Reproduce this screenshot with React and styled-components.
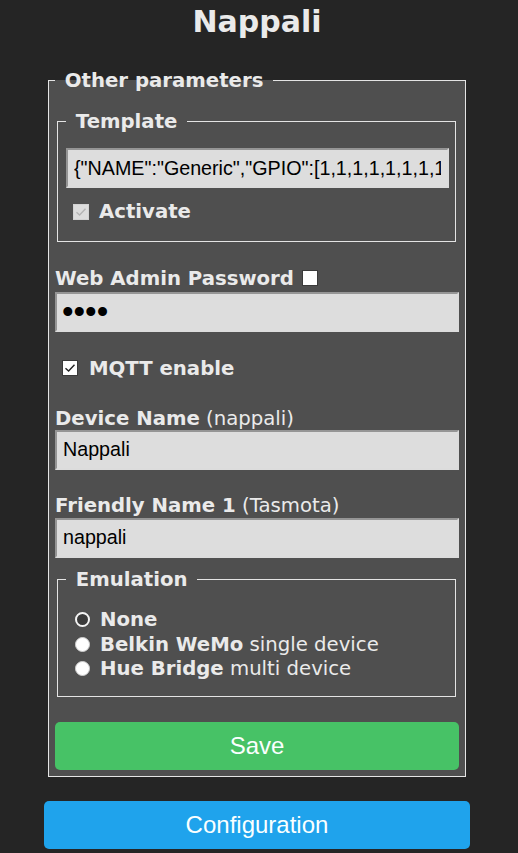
import React from 'react'
import styled, {createGlobalStyle} from 'styled-components'

const GlobalStyle = createGlobalStyle`
  html, body {
    margin: 0;
    padding: 0;
    background: #252525;
    overflow: hidden;
  }
  body {
    color: #eaeaea;
    font-family: "DejaVu Sans", Verdana, sans-serif;
    font-size: 19.7px;
    line-height: 23px;
  }
`

const Page = styled.div`
  padding-right: 4px;
`

const Wrap = styled.div`
  width: 426px;
  margin: 0 auto;
  display: flex;
  flex-direction: column;
`

const Title = styled.h2`
  margin: 4px 0 0;
  font-size: 30px;
  line-height: 35px;
  font-weight: bold;
  text-align: center;
`

const Fieldset = styled.fieldset`
  margin: ${p => p.$outer ? '29.5px 4px 0' : p.$top || '0 3px 0 2px'};
  padding: ${p => p.$outer ? '18px 6px 6px' : p.$pad || '15.5px 6px 18px 8px'};
  border: 1px solid #e4e4e4;
  background: #4f4f4f;
  min-width: 0;
  display: flex;
  flex-direction: column;
`

const Legend = styled.legend`
  padding: 0 0.5em;
  font-weight: bold;
  line-height: 23px;
`

const TextInput = styled.input`
  display: block;
  box-sizing: border-box;
  width: 100%;
  height: 40px;
  margin: ${p => p.$mt || 0} 0 0;
  padding: 0 ${p => p.$secret ? '5px' : '6px'};
  border-style: solid;
  border-width: 2px;
  border-color: #959595 #dcdcdc #dcdcdc #959595;
  background: #dddddd;
  color: #000;
  font-family: "Liberation Sans", Tahoma, sans-serif;
  font-size: ${p => p.$secret ? '33px' : '19.7px'};
  outline: none;
`

const Label = styled.div`
  display: flex;
  align-items: center;
  margin-top: ${p => p.$mt || '24.5px'};
  line-height: 23px;
  b { font-weight: bold; }
  span { white-space: pre; }
`

const CheckRow = styled.label`
  display: flex;
  align-items: center;
  margin: ${p => p.$mt || 0} 0 0 7px;
  line-height: 23px;
  font-weight: bold;
  gap: ${p => p.$gap || '10px'};
`

const Box = styled.span`
  box-sizing: border-box;
  width: 16px;
  height: 16px;
  flex: none;
  display: flex;
  align-items: center;
  justify-content: center;
  background: ${p => p.$disabled ? '#dcdcdc' : '#fff'};
  border: 1px solid ${p => p.$disabled ? '#d2d2d2' : '#3a3a3a'};
  margin-left: ${p => p.$ml || 0};
`

const RadioList = styled.div`
  display: flex;
  flex-direction: column;
`

const RadioRow = styled.div`
  display: flex;
  align-items: center;
  height: 24.5px;
  span { white-space: pre; }
`

const Dot = styled.span`
  box-sizing: border-box;
  width: 15px;
  height: 15px;
  flex: none;
  border-radius: 50%;
  margin: 0 10px 0 9px;
  background: ${p => p.$on ? '#3b3b3b' : '#fff'};
  border: ${p => p.$on ? '2px solid #f4f4f4' : '1px solid #cfcfcf'};
`

const Button = styled.button`
  display: block;
  width: 100%;
  height: 48px;
  margin-top: ${p => p.$mt || 0};
  border: 0;
  border-radius: 5px;
  background: ${p => p.$color};
  color: #faffff;
  font-family: "Liberation Sans", Tahoma, sans-serif;
  font-size: 24px;
  cursor: pointer;
`

const Check = ({color}) => (
  <svg width="12" height="10" viewBox="0 0 12 10">
    <path d="M1.5 5.2 L4.6 8 L10.5 1.8" fill="none" stroke={color} strokeWidth="1.4" />
  </svg>
)

const template = '{"NAME":"Generic","GPIO":[1,1,1,1,1,1,1,1,1,1,1,1,1,1],"FLAG":0,"BASE":18}'

const emulation = [
  {name: 'None', note: '', on: true},
  {name: 'Belkin WeMo', note: ' single device'},
  {name: 'Hue Bridge', note: ' multi device'},
]

export default function App() {
  return (
    <Page>
      <GlobalStyle />
      <Wrap>
        <Title>Nappali</Title>
        <Fieldset $outer>
          <Legend>Other parameters</Legend>
          <Fieldset>
            <Legend>Template</Legend>
            <TextInput readOnly value={template} />
            <CheckRow $mt="12px">
              <Box $disabled><Check color="#b4b4b4" /></Box>
              Activate
            </CheckRow>
          </Fieldset>

          <Label>
            <b>Web Admin Password</b>
            <Box $ml="8px" />
          </Label>
          <TextInput type="password" readOnly value="abcd" $secret $mt="2.5px" />

          <CheckRow $mt="24.5px" $gap="11px">
            <Box><Check color="#222" /></Box>
            MQTT enable
          </CheckRow>

          <Label $mt="27px">
            <b>Device Name</b><span> (nappali)</span>
          </Label>
          <TextInput readOnly value="Nappali" />

          <Label>
            <b>Friendly Name 1</b><span> (Tasmota)</span>
          </Label>
          <TextInput readOnly value="nappali" $mt="0.5px" />

          <Fieldset $top="10.5px 3px 0 2px" $pad="16.5px 6px 15px 8px">
            <Legend>Emulation</Legend>
            <RadioList>
              {emulation.map(e => (
                <RadioRow key={e.name}>
                  <Dot $on={e.on} />
                  <b>{e.name}</b><span>{e.note}</span>
                </RadioRow>
              ))}
            </RadioList>
          </Fieldset>

          <Button $color="#47c266" $mt="25px">Save</Button>
        </Fieldset>
        <Button $color="#1fa3ec" $mt="24px">Configuration</Button>
      </Wrap>
    </Page>
  )
}
